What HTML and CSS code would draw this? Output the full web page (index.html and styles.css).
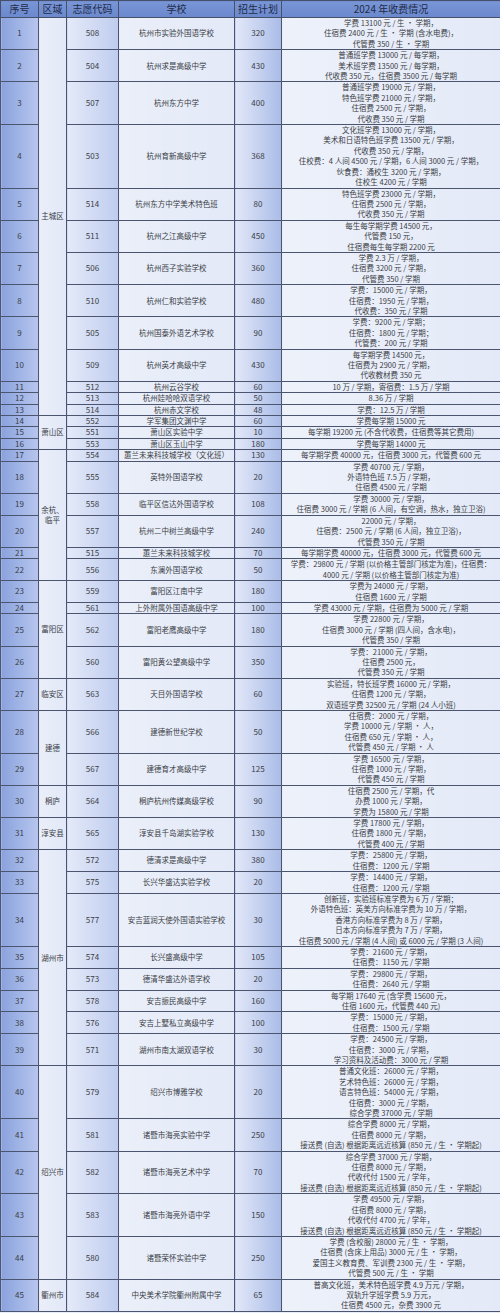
FILE: index.html
```html
<!DOCTYPE html>
<html lang="zh-CN">
<head>
<meta charset="utf-8">
<title>2024 年收费情况</title>
<link rel="stylesheet" href="styles.css">
</head>
<body>
<table class="fees">
<colgroup>
<col class="w-no"><col class="w-area"><col class="w-code"><col class="w-school"><col class="w-plan"><col class="w-fee">
</colgroup>
<thead>
<tr><th>序号</th><th>区域</th><th>志愿代码</th><th>学校</th><th>招生计划</th><th>2024 年收费情况</th></tr>
</thead>
<tbody>
<tr><td class="no">1</td><td class="area" rowspan="13">主城区</td><td class="code">508</td><td class="school">杭州市实验外国语学校</td><td class="plan">320</td><td class="fee">学费 13100 元 / 生 · 学期，<br>住宿费 2400 元 / 生 · 学期 (含水电费)，<br>代管费 350 / 生 · 学期</td></tr>
<tr><td class="no">2</td><td class="code">504</td><td class="school">杭州求是高级中学</td><td class="plan">430</td><td class="fee">普通班学费 13000 元 / 每学期，<br>美术班学费 13500 元 / 每学期，<br>代收费 350 元，住宿费 3500 元 / 每学期</td></tr>
<tr><td class="no">3</td><td class="code">507</td><td class="school">杭州东方中学</td><td class="plan">400</td><td class="fee">普通班学费 19000 元 / 学期，<br>特色班学费 21000 元 / 学期，<br>住宿费 2500 元 / 学期，<br>代收费 350 元 / 学期</td></tr>
<tr><td class="no">4</td><td class="code">503</td><td class="school">杭州育新高级中学</td><td class="plan">368</td><td class="fee">文化班学费 13000 元 / 学期，<br>美术和日语特色班学费 13500 元 / 学期，<br>代收费 350 元 / 学期，<br>住校费：4 人间 4500 元 / 学期，6 人间 3000 元 / 学期，<br>伙食费：通校生 3200 元 / 学期，<br>住校生 4200 元 / 学期</td></tr>
<tr><td class="no">5</td><td class="code">514</td><td class="school">杭州东方中学美术特色班</td><td class="plan">80</td><td class="fee">特色班学费 23000 元 / 学期，<br>住宿费 2500 元 / 学期，<br>代收费 350 元 / 学期</td></tr>
<tr><td class="no">6</td><td class="code">511</td><td class="school">杭州之江高级中学</td><td class="plan">450</td><td class="fee">每生每学期学费 14500 元，<br>代管费 150 元，<br>住宿费每生每学期 2200 元</td></tr>
<tr><td class="no">7</td><td class="code">506</td><td class="school">杭州西子实验学校</td><td class="plan">360</td><td class="fee">学费 2.3 万 / 学期，<br>住宿费 3200 元 / 学期，<br>代管费 350 / 学期</td></tr>
<tr><td class="no">8</td><td class="code">510</td><td class="school">杭州仁和实验学校</td><td class="plan">480</td><td class="fee">学费：15000 元 / 学期，<br>住宿费：1950 元 / 学期，<br>代收费：350 元 / 学期</td></tr>
<tr><td class="no">9</td><td class="code">505</td><td class="school">杭州国泰外语艺术学校</td><td class="plan">90</td><td class="fee">学费：9200 元 / 学期；<br>住宿费：1800 元 / 学期；<br>代管费：200 元 / 学期</td></tr>
<tr><td class="no">10</td><td class="code">509</td><td class="school">杭州英才高级中学</td><td class="plan">430</td><td class="fee">每学期学费 14500 元，<br>住宿费为 2900 元 / 学期，<br>代收教材费 350 元</td></tr>
<tr><td class="no">11</td><td class="code">512</td><td class="school">杭州云谷学校</td><td class="plan">60</td><td class="fee">10 万 / 学期，寄宿费：1.5 万 / 学期</td></tr>
<tr><td class="no">12</td><td class="code">513</td><td class="school">杭州娃哈哈双语学校</td><td class="plan">50</td><td class="fee">8.36 万 / 学期</td></tr>
<tr><td class="no">13</td><td class="code">514</td><td class="school">杭州赤文学校</td><td class="plan">48</td><td class="fee">学费：12.5 万 / 学期</td></tr>
<tr><td class="no">14</td><td class="area" rowspan="3">萧山区</td><td class="code">552</td><td class="school">学军集团文渊中学</td><td class="plan">60</td><td class="fee">学费每学期 15000 元</td></tr>
<tr><td class="no">15</td><td class="code">551</td><td class="school">萧山区实验中学</td><td class="plan">10</td><td class="fee">每学期 19200 元 (不含代收费，住宿费等其它费用)</td></tr>
<tr><td class="no">16</td><td class="code">553</td><td class="school">萧山区玉山中学</td><td class="plan">180</td><td class="fee">学费每学期 14000 元</td></tr>
<tr><td class="no">17</td><td class="area" rowspan="6">余杭、<br>临平</td><td class="code">554</td><td class="school">蕙兰未来科技城学校（文化班）</td><td class="plan">130</td><td class="fee">每学期学费 40000 元，住宿费 3000 元，代管费 600 元</td></tr>
<tr><td class="no">18</td><td class="code">555</td><td class="school">英特外国语学校</td><td class="plan">20</td><td class="fee">学费 40700 元 / 学期，<br>外语特色班 7.5 万 / 学期，<br>住宿费 4500 元 / 学期</td></tr>
<tr><td class="no">19</td><td class="code">558</td><td class="school">临平区信达外国语学校</td><td class="plan">108</td><td class="fee">学费 30000 元 / 学期，<br>住宿费 3000 元 / 学期 (6 人间，有空调，热水，独立卫浴)</td></tr>
<tr><td class="no">20</td><td class="code">557</td><td class="school">杭州二中树兰高级中学</td><td class="plan">240</td><td class="fee">22000 元 / 学期，<br>住宿费：2500 元 / 学期 (6 人间，独立卫浴)，<br>代管费 350 元 / 学期</td></tr>
<tr><td class="no">21</td><td class="code">515</td><td class="school">蕙兰未来科技城学校</td><td class="plan">70</td><td class="fee">每学期学费 40000 元，住宿费 3000 元，代管费 600 元</td></tr>
<tr><td class="no">22</td><td class="code">556</td><td class="school">东澜外国语学校</td><td class="plan">50</td><td class="fee">学费：29800 元 / 学期 (以价格主管部门核定为准)，住宿费：<br>4000 元 / 学期 (以价格主管部门核定为准)</td></tr>
<tr><td class="no">23</td><td class="area" rowspan="4">富阳区</td><td class="code">559</td><td class="school">富阳区江南中学</td><td class="plan">180</td><td class="fee">学费为 24000 元 / 学期，<br>住宿费 1600 元 / 学期</td></tr>
<tr><td class="no">24</td><td class="code">561</td><td class="school">上外附属外国语高级中学</td><td class="plan">100</td><td class="fee">学费 43000 元 / 学期，住宿费为 5000 元 / 学期</td></tr>
<tr><td class="no">25</td><td class="code">562</td><td class="school">富阳老鹰高级中学</td><td class="plan">180</td><td class="fee">学费 22800 元 / 学期，<br>住宿费 3000 元 / 学期 (四人间，含水电)，<br>代管费 350 / 学期</td></tr>
<tr><td class="no">26</td><td class="code">560</td><td class="school">富阳黄公望高级中学</td><td class="plan">350</td><td class="fee">学费：21000 元 / 学期，<br>住宿费 2500 元，<br>代管费 350 元 / 学期</td></tr>
<tr><td class="no">27</td><td class="area">临安区</td><td class="code">563</td><td class="school">天目外国语学校</td><td class="plan">60</td><td class="fee">实验班，特长班学费 16000 元 / 学期，<br>住宿费 1200 元 / 学期，<br>双语班学费 32500 元 / 学期 (24 人小班)</td></tr>
<tr><td class="no">28</td><td class="area" rowspan="2">建德</td><td class="code">566</td><td class="school">建德新世纪学校</td><td class="plan">50</td><td class="fee">住宿费：2000 元 / 学期，<br>学费 10000 元 / 学期 · 人，<br>住宿费 650 元 / 学期 · 人，<br>代管费 450 元 / 学期 · 人</td></tr>
<tr><td class="no">29</td><td class="code">567</td><td class="school">建德育才高级中学</td><td class="plan">125</td><td class="fee">学费 16500 元 / 学期，<br>住宿费 1000 元 / 学期，<br>代管费 450 元 / 学期</td></tr>
<tr><td class="no">30</td><td class="area">桐庐</td><td class="code">564</td><td class="school">桐庐杭州传媒高级学校</td><td class="plan">90</td><td class="fee">住宿费 2500 元 / 学期，代<br>办费 1000 元 / 学期，<br>学费为 15800 元 / 学期</td></tr>
<tr><td class="no">31</td><td class="area">淳安县</td><td class="code">565</td><td class="school">淳安县千岛湖实验学校</td><td class="plan">130</td><td class="fee">学费 17800 元 / 学期，<br>住宿费 1800 元 / 学期，<br>代管费 400 元 / 学期</td></tr>
<tr><td class="no">32</td><td class="area" rowspan="8">湖州市</td><td class="code">572</td><td class="school">德清求是高级中学</td><td class="plan">380</td><td class="fee">学费：25800 元 / 学期，<br>住宿费：1200 元 / 学期</td></tr>
<tr><td class="no">33</td><td class="code">575</td><td class="school">长兴华盛达实验学校</td><td class="plan">20</td><td class="fee">学费：14400 元 / 学期，<br>住宿费：1200 元 / 学期</td></tr>
<tr><td class="no">34</td><td class="code">577</td><td class="school">安吉蓝润天使外国语实验学校</td><td class="plan">30</td><td class="fee">创新班，实验班标准学费为 6 万 / 学期；<br>外语特色班：英美方向标准学费为 10 万 / 学期，<br>香港方向标准学费为 8 万 / 学期，<br>日本方向标准学费为 7 万 / 学期，<br>住宿费 5000 元 / 学期 (4 人间) 或 6000 元 / 学期 (3 人间)</td></tr>
<tr><td class="no">35</td><td class="code">574</td><td class="school">长兴盛高级中学</td><td class="plan">105</td><td class="fee">学费：21600 元 / 学期，<br>住宿费：1150 元 / 学期</td></tr>
<tr><td class="no">36</td><td class="code">573</td><td class="school">德清华盛达外语学校</td><td class="plan">20</td><td class="fee">学费：29800 元 / 学期，<br>住宿费：2640 元 / 学期</td></tr>
<tr><td class="no">37</td><td class="code">578</td><td class="school">安吉振民高级中学</td><td class="plan">160</td><td class="fee">每学期 17640 元 (含学费 15600 元，<br>住宿 1600 元，代管费 440 元)</td></tr>
<tr><td class="no">38</td><td class="code">576</td><td class="school">安吉上墅私立高级中学</td><td class="plan">100</td><td class="fee">学费：15000 元 / 学期，<br>住宿费：1500 元 / 学期</td></tr>
<tr><td class="no">39</td><td class="code">571</td><td class="school">湖州市南太湖双语学校</td><td class="plan">30</td><td class="fee">学费：24500 元 / 学期，<br>住宿费：3000 元 / 学期，<br>学习资料及活动费：3000 元 / 学期</td></tr>
<tr><td class="no">40</td><td class="area" rowspan="5">绍兴市</td><td class="code">579</td><td class="school">绍兴市博雅学校</td><td class="plan">20</td><td class="fee">普通文化班：26000 元 / 学期，<br>艺术特色班：26000 元 / 学期，<br>语言特色班：54000 元 / 学期，<br>住宿费：3000 元 / 学期，<br>综合学费 37000 元 / 学期</td></tr>
<tr><td class="no">41</td><td class="code">581</td><td class="school">诸暨市海亮实验中学</td><td class="plan">250</td><td class="fee">综合学费 8000 元 / 学期，<br>住宿费 8000 元 / 学期，<br>接送费 (自选) 根据距离远近核算 (850 元 / 生 · 学期起)</td></tr>
<tr><td class="no">42</td><td class="code">582</td><td class="school">诸暨市海亮艺术中学</td><td class="plan">70</td><td class="fee">综合学费 37000 元 / 学期，<br>住宿费 8000 元 / 学期，<br>代收代付 1500 元 / 学年，<br>接送费 (自选) 根据距离远近核算 (850 元 / 生 · 学期起)</td></tr>
<tr><td class="no">43</td><td class="code">583</td><td class="school">诸暨市海亮外语中学</td><td class="plan">150</td><td class="fee">学费 49500 元 / 学期，<br>住宿费 8000 元 / 学期，<br>代收代付 4700 元 / 学年，<br>接送费 (自选) 根据距离远近核算 (850 元 / 生 · 学期起)</td></tr>
<tr><td class="no">44</td><td class="code">580</td><td class="school">诸暨荣怀实验中学</td><td class="plan">250</td><td class="fee">学费 (含校服) 28000 元 / 生 · 学期，<br>住宿费 (含床上用品) 3000 元 / 生 · 学期，<br>爱国主义教育费、军训费 2300 元 / 生 · 学期，<br>代管费 500 元 / 生 · 学期</td></tr>
<tr><td class="no">45</td><td class="area">衢州市</td><td class="code">584</td><td class="school">中央美术学院衢州附属中学</td><td class="plan">65</td><td class="fee">普高文化班，美术特色班学费 4.9 万元 / 学期，<br>双轨升学班学费 5.9 万元，<br>住宿费 4500 元，杂费 3900 元</td></tr>
</tbody>
</table>
</body>
</html>
```

FILE: styles.css
```css
html, body {
  margin: 0;
  padding: 0;
  background: #e9edf7;
}

.fees {
  width: 500px;
  border-collapse: collapse;
  table-layout: fixed;
  font-family: "Noto Sans CJK SC", "Noto Sans", sans-serif;
  color: #3a3d45;
}

.w-no { width: 38px; }
.w-area { width: 28px; }
.w-code { width: 52px; }
.w-school { width: 116px; }
.w-plan { width: 47px; }
.w-fee { width: 219px; }

.fees th {
  height: 16px;
  padding: 0;
  line-height: 16px;
  font-size: 10px;
  font-weight: normal;
  color: #1e2b48;
  background: linear-gradient(to bottom, #7995d6, #6a88cd);
  border: 1px solid #46506a;
  text-align: center;
  white-space: nowrap;
}

.fees td {
  padding: 0;
  font-size: 7.5px;
  line-height: 10.4px;
  text-align: center;
  vertical-align: middle;
  white-space: nowrap;
  border: 1px solid #4b5570;
}

.fees .no {
  font-size: 8px;
  background: linear-gradient(to right, #8aa2dd, #b7c6ee);
}

.fees .area {
  white-space: normal;
  background: linear-gradient(to right, #e9eef9, #e2e8f7);
}

.fees .code {
  font-size: 8px;
  background: linear-gradient(to right, #e4eaf8, #bfccef);
}

.fees .school {
  background: linear-gradient(to right, #eaeff9, #e3e9f7);
}

.fees .plan {
  font-size: 8px;
  background: linear-gradient(to right, #e2e8f8, #a9bbe7);
}

.fees .fee {
  background: linear-gradient(to right, #edf1fa, #e3e9f7);
}
```
